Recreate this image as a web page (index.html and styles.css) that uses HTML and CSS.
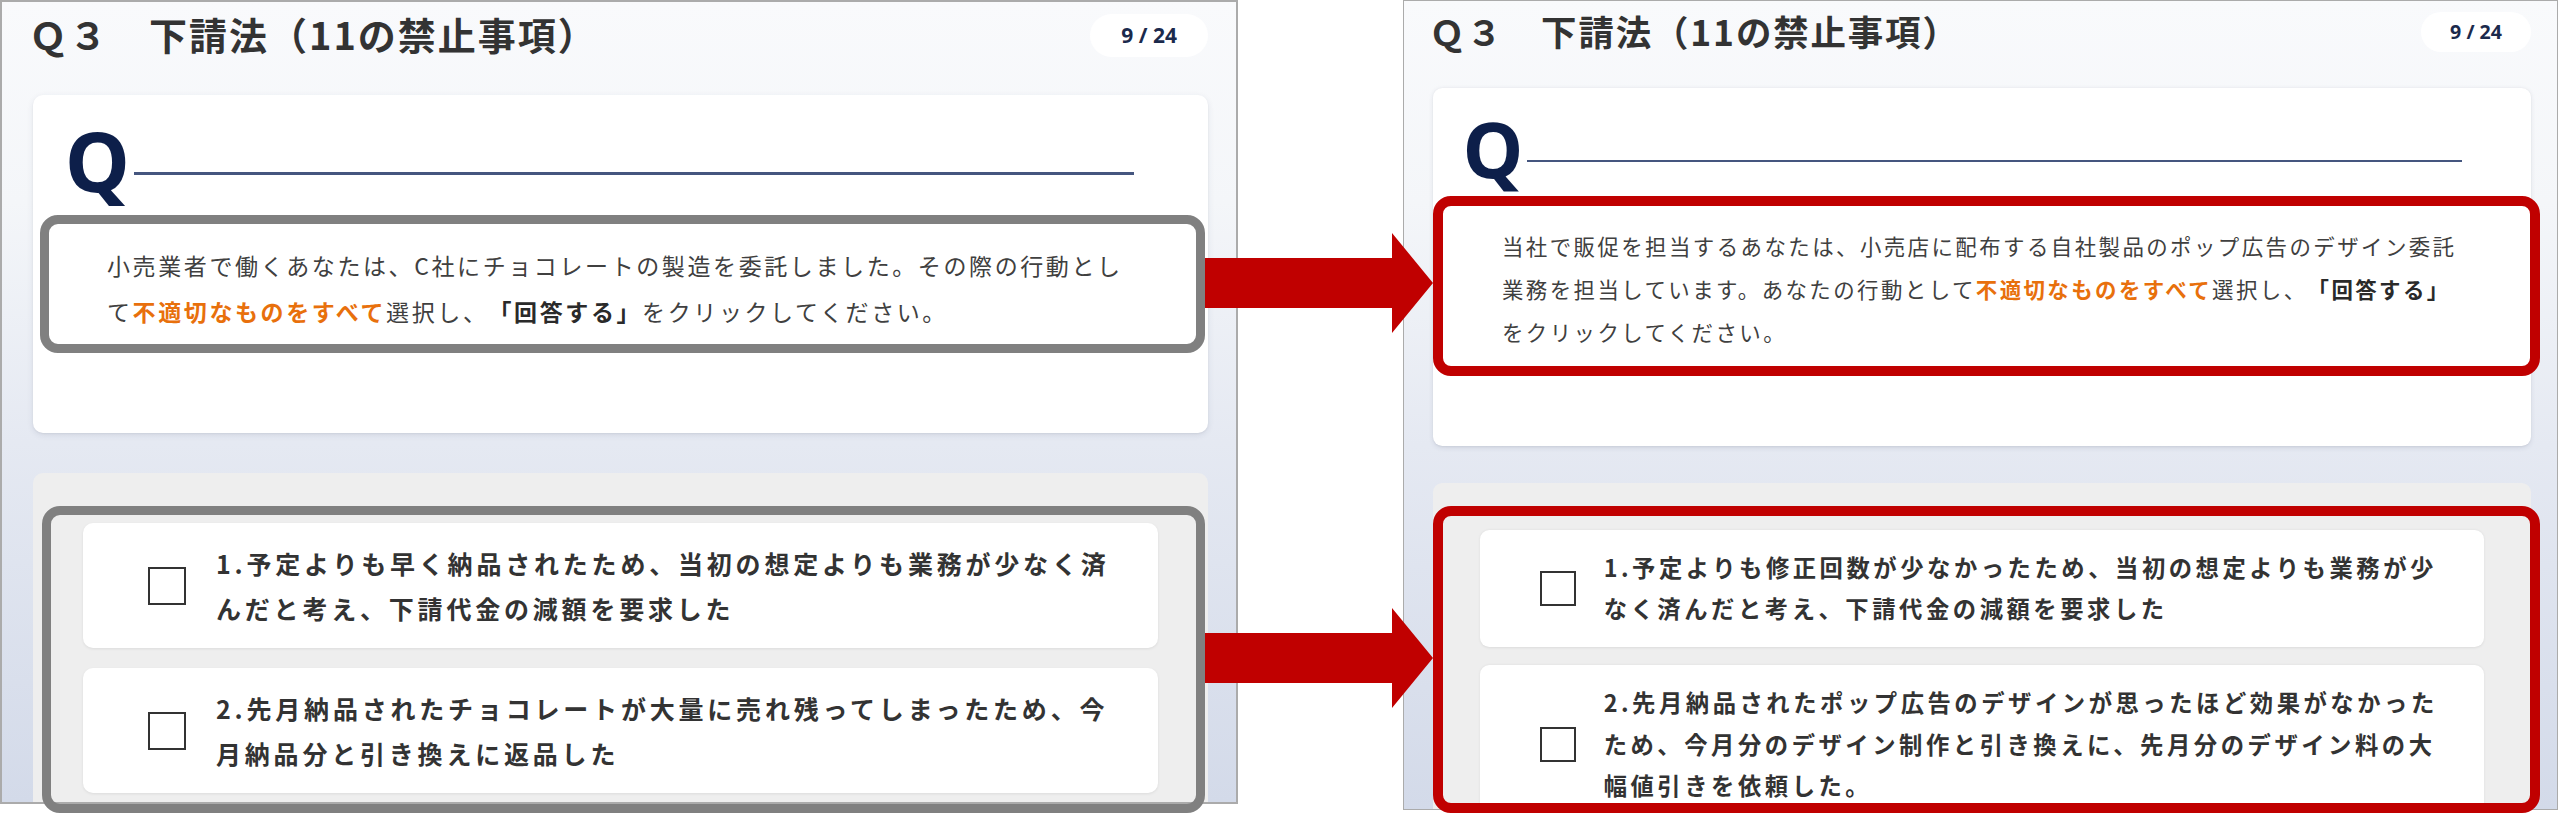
FILE: index.html
```html
<!DOCTYPE html>
<html lang="ja">
<head>
<meta charset="utf-8">
<title>下請法（11の禁止事項）</title>
<link rel="stylesheet" href="styles.css">
</head>
<body>
<div class="stage">
  <section class="panel">
    <header class="panel-head">
      <h1 class="title">Ｑ３　下請法（11の禁止事項）</h1>
      <span class="count">9 / 24</span>
    </header>
    <div class="qcard">
      <div class="qhead"><span class="qmark">Q</span><span class="qrule"></span></div>
      <p class="qtext">小売業者で働くあなたは、C社にチョコレートの製造を委託しました。その際の行動として<b class="warn">不適切なものをすべて</b>選択し、<b class="key">「回答する」</b>をクリックしてください。</p>
    </div>
    <div class="options">
      <div class="opt"><span class="box"></span><span class="opt-text">1.予定よりも早く納品されたため、当初の想定よりも業務が少なく済んだと考え、下請代金の減額を要求した</span></div>
      <div class="opt"><span class="box"></span><span class="opt-text">2.先月納品されたチョコレートが大量に売れ残ってしまったため、今月納品分と引き換えに返品した</span></div>
    </div>
  </section>

  <section class="panel panel-small">
    <header class="panel-head">
      <h1 class="title">Ｑ３　下請法（11の禁止事項）</h1>
      <span class="count">9 / 24</span>
    </header>
    <div class="qcard">
      <div class="qhead"><span class="qmark">Q</span><span class="qrule"></span></div>
      <p class="qtext">当社で販促を担当するあなたは、小売店に配布する自社製品のポップ広告のデザイン委託業務を担当しています。あなたの行動として<b class="warn">不適切なものをすべて</b>選択し、<b class="key">「回答する」</b>をクリックしてください。</p>
    </div>
    <div class="options">
      <div class="opt"><span class="box"></span><span class="opt-text">1.予定よりも修正回数が少なかったため、当初の想定よりも業務が少なく済んだと考え、下請代金の減額を要求した</span></div>
      <div class="opt"><span class="box"></span><span class="opt-text">2.先月納品されたポップ広告のデザインが思ったほど効果がなかったため、今月分のデザイン制作と引き換えに、先月分のデザイン料の大幅値引きを依頼した。</span></div>
    </div>
  </section>

  <div class="mark mark-gray mark-q-old"></div>
  <div class="mark mark-gray mark-o-old"></div>
  <div class="mark mark-red mark-q-new"></div>
  <div class="mark mark-red mark-o-new"></div>

  <svg class="arrow arrow-q" viewBox="0 0 228 100" aria-hidden="true"><polygon points="0,25 187,25 187,0 228,50 187,100 187,75 0,75"/></svg>
  <svg class="arrow arrow-o" viewBox="0 0 228 100" aria-hidden="true"><polygon points="0,25 187,25 187,0 228,50 187,100 187,75 0,75"/></svg>
</div>
</body>
</html>
```
FILE: styles.css
```css
html, body {
  margin: 0;
  padding: 0;
  background: #ffffff;
}

body {
  font-family: "Noto Sans CJK JP", "Noto Sans", sans-serif;
  color: #333333;
  text-spacing-trim: space-all;
}

.stage {
  position: relative;
  width: 2560px;
  height: 815px;
  display: flex;
  align-items: flex-start;
  gap: 165px;
  overflow: hidden;
  background: #ffffff;
}

.panel {
  flex: none;
  box-sizing: border-box;
  width: 1238px;
  height: 804px;
  border: 2px solid #ababab;
  padding: 12px 28px 0 31px;
  overflow: hidden;
  background: linear-gradient(180deg, #f9fafc 0%, #f4f6f9 25%, #e5e9f2 55%, #d3dae9 100%);
}

.panel-small {
  zoom: 0.933;
  height: 868px;
}

.panel-head {
  display: flex;
  align-items: center;
  justify-content: space-between;
  height: 43px;
}

.title {
  margin: 0 0 4px -4px;
  font-size: 38px;
  font-weight: 700;
  letter-spacing: 2px;
  line-height: 1;
  color: #333333;
}

.count {
  height: 43px;
  line-height: 43px;
  padding: 0 31px;
  border-radius: 22px;
  background: #ffffff;
  font-family: "Noto Sans", sans-serif;
  font-weight: 700;
  font-size: 21px;
  color: #1b2a4c;
}

.qcard {
  margin-top: 38px;
  padding: 24px 68px 99px 32px;
  background: #ffffff;
  border-radius: 10px;
  box-shadow: 0 2px 6px rgba(40, 50, 90, 0.10), 0 1px 2px rgba(0, 0, 0, 0.05);
}

.qhead {
  display: flex;
  align-items: flex-start;
}

.qmark {
  font-family: "Noto Sans", sans-serif;
  font-weight: 700;
  font-size: 82px;
  line-height: 1;
  color: #0d1f4a;
}

.qrule {
  flex: 1;
  height: 3px;
  margin: 53px 6px 0 4px;
  background: #45567f;
}

.qtext {
  margin: 41px 0 0 42px;
  font-size: 23px;
  line-height: 46px;
  letter-spacing: 2.6px;
  color: #404040;
}

.warn {
  color: #e8700c;
  font-weight: 700;
}

.key {
  color: #2a2a2a;
  font-weight: 700;
}

.options {
  margin-top: 40px;
  padding: 50px;
  display: flex;
  flex-direction: column;
  gap: 20px;
  background: #eeeeee;
  border-radius: 10px 10px 0 0;
}

.opt {
  display: flex;
  align-items: center;
  gap: 30px;
  padding: 18px 33px 18px 65px;
  background: #ffffff;
  border-radius: 10px;
  box-shadow: 0 1px 3px rgba(0, 0, 0, 0.08);
}

.box {
  flex: none;
  box-sizing: border-box;
  width: 38px;
  height: 38px;
  border: 2px solid #333333;
  background: #ffffff;
}

.panel-small .box {
  border-width: 2.2px;
}

.opt-text {
  font-size: 25px;
  font-weight: 700;
  line-height: 44.5px;
  letter-spacing: 3.8px;
  color: #333333;
}

.mark {
  position: absolute;
  box-sizing: border-box;
  border-style: solid;
  border-radius: 18px;
  pointer-events: none;
}

.mark-gray {
  border-width: 9px;
  border-color: #808080;
}

.mark-red {
  border-width: 10px;
  border-color: #c00000;
}

.mark-q-old { left: 40px;   top: 215px; width: 1165px; height: 138px; }
.mark-o-old { left: 42px;   top: 506px; width: 1163px; height: 307px; }
.mark-q-new { left: 1433px; top: 196px; width: 1107px; height: 180px; }
.mark-o-new { left: 1433px; top: 506px; width: 1107px; height: 307px; }

.arrow {
  position: absolute;
  left: 1205px;
  width: 228px;
  height: 100px;
  fill: #c00000;
}

.arrow-q { top: 233px; }
.arrow-o { top: 608px; }
```
